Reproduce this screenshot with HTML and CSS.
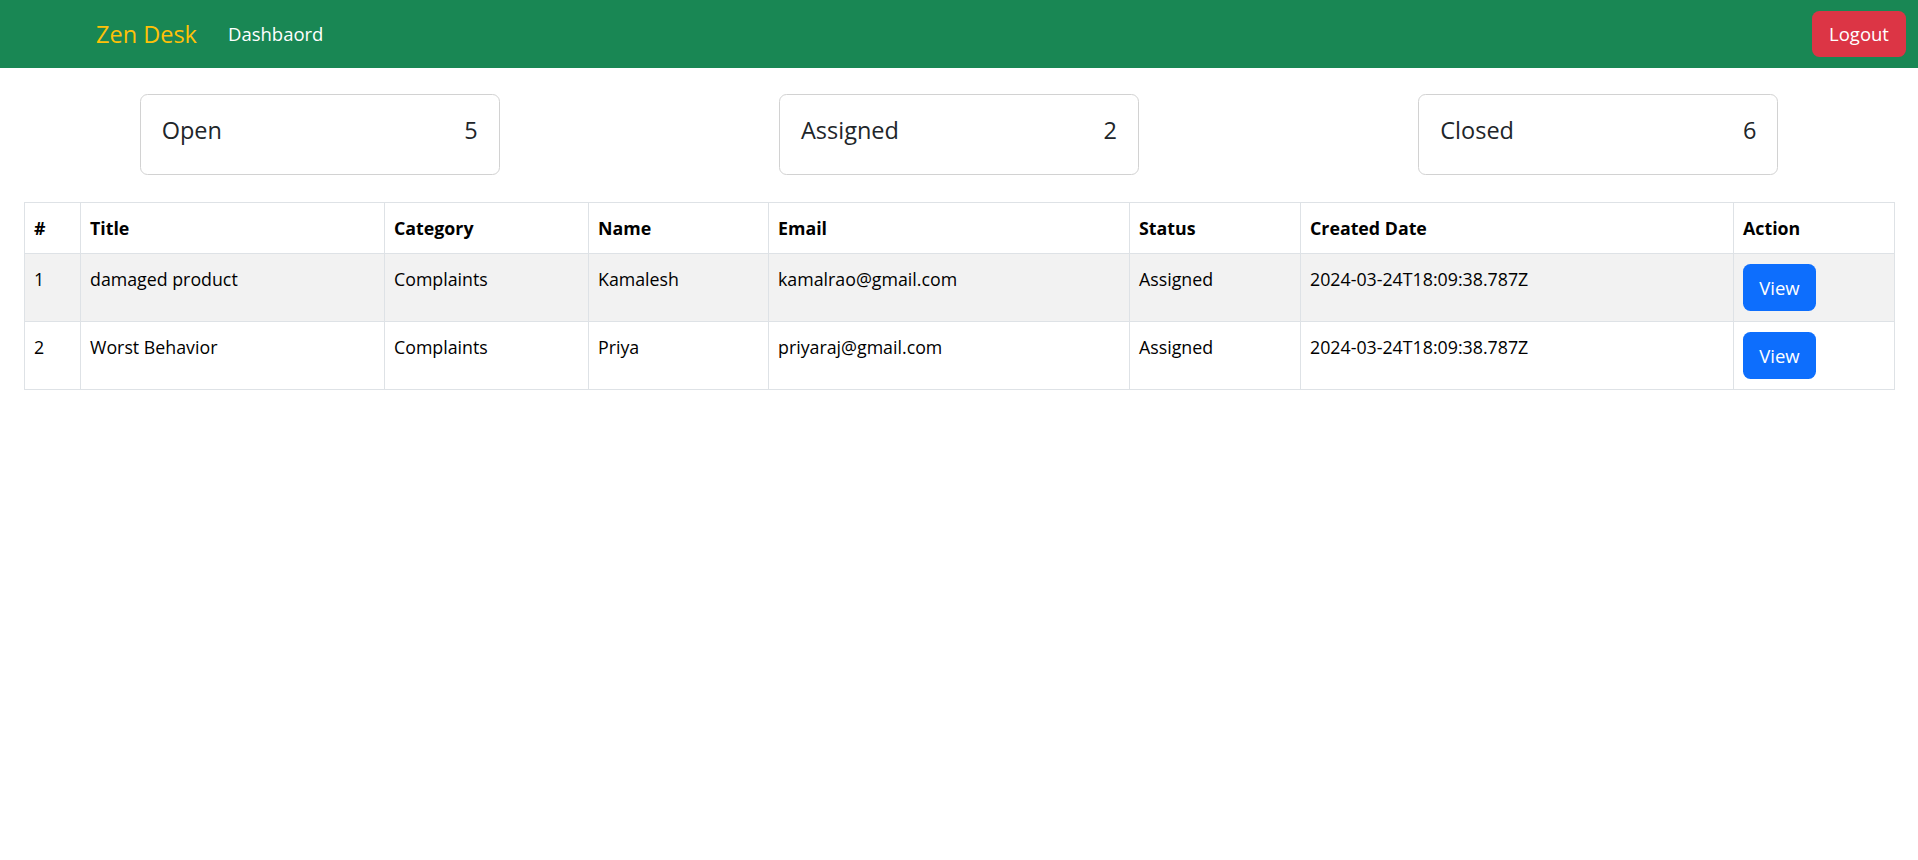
FILE: index.html
```html
<!DOCTYPE html>
<html>
<head>
<meta charset="utf-8">
<title>Zen Desk</title>
<link rel="stylesheet" href="styles.css">
</head>
<body>
<nav class="navbar">
  <div class="nav-left">
    <a class="brand" href="#">Zen Desk</a>
    <a class="nav-link" href="#">Dashbaord</a>
  </div>
  <button class="btn btn-danger">Logout</button>
</nav>

<div class="cards">
  <div class="card"><div class="card-body"><span>Open</span><span>5</span></div></div>
  <div class="card"><div class="card-body"><span>Assigned</span><span>2</span></div></div>
  <div class="card"><div class="card-body"><span>Closed</span><span>6</span></div></div>
</div>

<div class="table-wrap">
  <table class="table">
    <colgroup>
      <col class="c-num"><col class="c-title"><col class="c-cat"><col class="c-name">
      <col class="c-email"><col class="c-status"><col class="c-date"><col class="c-action">
    </colgroup>
    <thead>
      <tr><th>#</th><th>Title</th><th>Category</th><th>Name</th><th>Email</th><th>Status</th><th>Created Date</th><th>Action</th></tr>
    </thead>
    <tbody>
      <tr class="striped">
        <td>1</td><td>damaged product</td><td>Complaints</td><td>Kamalesh</td><td>kamalrao@gmail.com</td><td>Assigned</td><td>2024-03-24T18:09:38.787Z</td>
        <td><button class="btn btn-primary">View</button></td>
      </tr>
      <tr>
        <td>2</td><td>Worst Behavior</td><td>Complaints</td><td>Priya</td><td>priyaraj@gmail.com</td><td>Assigned</td><td>2024-03-24T18:09:38.787Z</td>
        <td><button class="btn btn-primary">View</button></td>
      </tr>
    </tbody>
  </table>
</div>
</body>
</html>
```

FILE: styles.css
```css
* { box-sizing: border-box; }
html, body { margin: 0; padding: 0; }
body {
  font-family: "Open Sans", "Noto Sans", sans-serif;
  font-size: 17.8px;
  line-height: 30px;
  color: #212529;
  background: #fff;
}
a { text-decoration: none; }

.navbar {
  height: 68px;
  background: #198754;
  display: flex;
  align-items: center;
  justify-content: space-between;
  padding: 0 12px 0 96px;
}
.nav-left { display: flex; align-items: center; }
.brand {
  color: #ffc107;
  font-size: 23.5px;
  line-height: 30px;
  margin-right: 31px;
}
.nav-link {
  color: #fff;
  font-size: 18.5px;
}

.btn {
  border: none;
  font-family: inherit;
  font-size: 18.5px;
  line-height: 30px;
  color: #fff;
  border-radius: 7.5px;
  padding: 0 15px;
  height: 46px;
  cursor: pointer;
}
.btn-danger { background: #dc3545; width: 94px; }
.btn-primary { background: #0d6efd; width: 73px; height: 47px; padding: 0; display: block; }

.cards {
  display: flex;
  justify-content: space-around;
  margin-top: 26px;
}
.card {
  width: 360px;
  height: 81px;
  border: 1px solid #d2d2d2;
  border-radius: 7.5px;
}
.card-body {
  padding: 20px 21px 0 21px;
  display: flex;
  justify-content: space-between;
  font-size: 23.5px;
  font-weight: 500;
  line-height: 30px;
}

.table-wrap { margin: 27px 24px 0; }
.table {
  width: 100%;
  border-collapse: collapse;
  table-layout: fixed;
  color: #000;
}
.table th, .table td {
  border: 1px solid #dee2e6;
  padding: 10px 9px;
  text-align: left;
  vertical-align: top;
}
.table th { font-weight: 700; }
.striped td { background: #f2f2f2; }
.c-num { width: 56px; }
.c-title { width: 304px; }
.c-cat { width: 204px; }
.c-name { width: 180px; }
.c-email { width: 361px; }
.c-status { width: 171px; }
.c-date { width: 433px; }
.c-action { width: 161px; }
```
